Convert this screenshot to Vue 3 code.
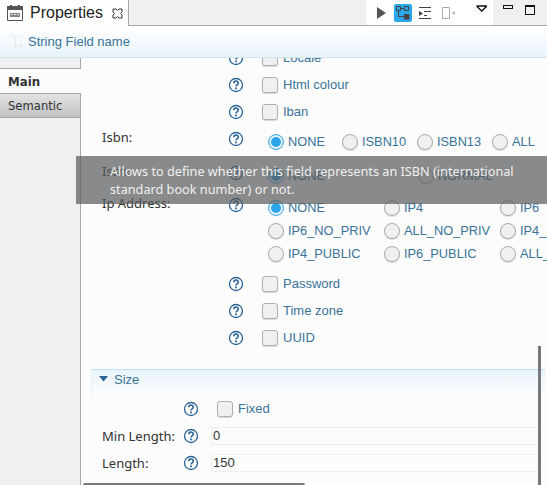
<script setup>
const topChecks = ['Locale', 'Html colour', 'Iban']
const bottomChecks = ['Password', 'Time zone', 'UUID']

const isbnOptions = [
	{ text: 'NONE', width: 74, on: true },
	{ text: 'ISBN10', width: 75 },
	{ text: 'ISBN13', width: 75 },
	{ text: 'ALL', width: 60 }
]
const issnOptions = [
	{ text: 'NONE', width: 150, on: true },
	{ text: 'NORMAL', width: 100 }
]
const ipRows = [
	[{ text: 'NONE', on: true }, { text: 'IP4' }, { text: 'IP6' }],
	[{ text: 'IP6_NO_PRIV' }, { text: 'ALL_NO_PRIV' }, { text: 'IP4_NO_PRIV' }],
	[{ text: 'IP4_PUBLIC' }, { text: 'IP6_PUBLIC' }, { text: 'ALL_PUBLIC' }]
]
</script>

<template>
	<div class="view">
		<header class="tabbar">
			<div class="tab">
				<svg class="tab-icon" width="18" height="18" viewBox="0 0 18 18">
					<path d="M1.5 3.5h15v13h-15z" fill="none" stroke="#555" />
					<path d="M1 2h16v4H1z" fill="#555" />
					<path d="M4 1h2v2H4zM12 1h2v2h-2z" fill="#555" />
					<path d="M4 9h10v4H4z" fill="#888" />
					<path d="M5 10.500h2M8 10.500h2M11 10.500h2" stroke="#ddd" />
				</svg>
				<span class="tab-title">Properties</span>
				<svg class="tab-close" width="11" height="11" viewBox="0 0 11 11">
					<path d="M1 1h3l1.500 1.500L7 1h3v3L8.500 5.500 10 7v3H7L5.500 8.500 4 10H1V7l1.500-1.500L1 4z" fill="none" stroke="#333" />
				</svg>
			</div>
			<div class="tab-fill"></div>
			<div class="toolbar">
				<svg width="18" height="18" viewBox="0 0 18 18">
					<path d="M5 3v12l9-6z" fill="#555" />
				</svg>
				<span class="tool-on">
					<svg width="14" height="14" viewBox="0 0 14 14">
						<path d="M.5.500h4v4h-4zM8.500.500h4v4h-4zM4.500 2.500h4M2.500 4.500v6h6" fill="none" stroke="#444" />
						<path d="M8 8h5.500v5.500H8z" fill="#444" />
					</svg>
				</span>
				<svg width="18" height="18" viewBox="0 0 18 18">
					<path d="M3 3.500h12M8 7.500h7M8 11.500h3M3 14.500h12" stroke="#444" fill="none" />
					<path d="M3 7v5l4-2.500z" fill="#444" />
				</svg>
				<svg width="18" height="18" viewBox="0 0 18 18">
					<path d="M4.500 3.500h7v11h-7z" fill="#fff" stroke="#aaa" />
					<path d="M14 9l2.500-2v4z" fill="#aaa" />
				</svg>
				<svg class="tool-menu" width="12" height="7" viewBox="0 0 12 7">
					<path d="M.5 1h10.500M1 1.500l4.700 4.500 4.700-4.500" fill="none" stroke="#111" stroke-width="1.300" />
				</svg>
			</div>
			<div class="window-btns">
				<span class="win-min"></span>
				<span class="win-max"></span>
			</div>
		</header>

		<div class="title-band">
			<svg width="16" height="16" viewBox="0 0 16 16">
				<path d="M1 2h11v2M6.500 2v11M4.500 13h4M12 9v5M9.500 11.500h5" fill="none" stroke="#e6eaed" stroke-width="1.200" />
			</svg>
			<span class="title-text">String Field name</span>
		</div>

		<div class="body">
			<aside class="sidebar">
				<div class="side-stub"></div>
				<div class="side-main">Main</div>
				<div class="side-semantic">Semantic</div>
				<div class="side-rest"></div>
			</aside>

			<main class="content">
				<div class="form">
					<div v-for="c in topChecks" :key="c" class="row">
						<span class="label"></span>
						<span class="help"><svg width="16" height="16" viewBox="0 0 16 16"><circle cx="8" cy="8" r="6.500" fill="#fff" stroke="#2a6496" stroke-width="1.300" /><path d="M5.800 6.300c0-3 4.500-3 4.500-.2 0 1.800-2.300 1.700-2.300 3.500" fill="none" stroke="#2a6496" stroke-width="1.600" /><path d="M7.100 10.500h1.800v1.800H7.100z" fill="#2a6496" /></svg></span>
						<span class="check"></span>
						<span class="opt-text">{{ c }}</span>
					</div>

					<div class="radio-group first-group">
						<span class="label">Isbn:</span>
						<span class="help"><svg width="16" height="16" viewBox="0 0 16 16"><circle cx="8" cy="8" r="6.500" fill="#fff" stroke="#2a6496" stroke-width="1.300" /><path d="M5.800 6.300c0-3 4.500-3 4.500-.2 0 1.800-2.300 1.700-2.300 3.500" fill="none" stroke="#2a6496" stroke-width="1.600" /><path d="M7.100 10.500h1.800v1.800H7.100z" fill="#2a6496" /></svg></span>
						<div class="radios">
							<div class="radio-row">
								<label v-for="o in isbnOptions" :key="o.text" class="radio-item" :style="{ width: o.width + 'px' }">
									<span class="radio" :class="{ on: o.on }"></span>{{ o.text }}
								</label>
							</div>
						</div>
					</div>

					<div class="radio-group issn-group">
						<span class="label">Issn:</span>
						<span class="help"><svg width="16" height="16" viewBox="0 0 16 16"><circle cx="8" cy="8" r="6.500" fill="#fff" stroke="#2a6496" stroke-width="1.300" /><path d="M5.800 6.300c0-3 4.500-3 4.500-.2 0 1.800-2.300 1.700-2.300 3.500" fill="none" stroke="#2a6496" stroke-width="1.600" /><path d="M7.100 10.500h1.800v1.800H7.100z" fill="#2a6496" /></svg></span>
						<div class="radios">
							<div class="radio-row">
								<label v-for="o in issnOptions" :key="o.text" class="radio-item" :style="{ width: o.width + 'px' }">
									<span class="radio" :class="{ on: o.on }"></span>{{ o.text }}
								</label>
							</div>
						</div>
					</div>

					<div class="radio-group ip-group">
						<span class="label">Ip Address:</span>
						<span class="help"><svg width="16" height="16" viewBox="0 0 16 16"><circle cx="8" cy="8" r="6.500" fill="#fff" stroke="#2a6496" stroke-width="1.300" /><path d="M5.800 6.300c0-3 4.500-3 4.500-.2 0 1.800-2.300 1.700-2.300 3.500" fill="none" stroke="#2a6496" stroke-width="1.600" /><path d="M7.100 10.500h1.800v1.800H7.100z" fill="#2a6496" /></svg></span>
						<div class="radios">
							<div v-for="(r, i) in ipRows" :key="i" class="radio-row">
								<label v-for="o in r" :key="o.text" class="radio-item ip-item">
									<span class="radio" :class="{ on: o.on }"></span>{{ o.text }}
								</label>
							</div>
						</div>
					</div>

					<div v-for="(c, i) in bottomChecks" :key="c" class="row" :class="{ 'after-radios': i === 0 }">
						<span class="label"></span>
						<span class="help"><svg width="16" height="16" viewBox="0 0 16 16"><circle cx="8" cy="8" r="6.500" fill="#fff" stroke="#2a6496" stroke-width="1.300" /><path d="M5.800 6.300c0-3 4.500-3 4.500-.2 0 1.800-2.300 1.700-2.300 3.500" fill="none" stroke="#2a6496" stroke-width="1.600" /><path d="M7.100 10.500h1.800v1.800H7.100z" fill="#2a6496" /></svg></span>
						<span class="check"></span>
						<span class="opt-text">{{ c }}</span>
					</div>

					<section class="size-section">
						<div class="size-head">
							<svg width="9" height="6" viewBox="0 0 9 6"><path d="M0 0h9L4.500 5.500z" fill="#2a6496" /></svg>
							<span class="size-title">Size</span>
						</div>
						<div class="size-row">
							<span class="size-label"></span>
							<span class="help"><svg width="16" height="16" viewBox="0 0 16 16"><circle cx="8" cy="8" r="6.500" fill="#fff" stroke="#2a6496" stroke-width="1.300" /><path d="M5.800 6.300c0-3 4.500-3 4.500-.2 0 1.800-2.300 1.700-2.300 3.500" fill="none" stroke="#2a6496" stroke-width="1.600" /><path d="M7.100 10.500h1.800v1.800H7.100z" fill="#2a6496" /></svg></span>
							<span class="check"></span>
							<span class="opt-text">Fixed</span>
						</div>
						<div class="size-row">
							<span class="size-label">Min Length:</span>
							<span class="help"><svg width="16" height="16" viewBox="0 0 16 16"><circle cx="8" cy="8" r="6.500" fill="#fff" stroke="#2a6496" stroke-width="1.300" /><path d="M5.800 6.300c0-3 4.500-3 4.500-.2 0 1.800-2.300 1.700-2.300 3.500" fill="none" stroke="#2a6496" stroke-width="1.600" /><path d="M7.100 10.500h1.800v1.800H7.100z" fill="#2a6496" /></svg></span>
							<div class="field">0</div>
						</div>
						<div class="size-row">
							<span class="size-label">Length:</span>
							<span class="help"><svg width="16" height="16" viewBox="0 0 16 16"><circle cx="8" cy="8" r="6.500" fill="#fff" stroke="#2a6496" stroke-width="1.300" /><path d="M5.800 6.300c0-3 4.500-3 4.500-.2 0 1.800-2.300 1.700-2.300 3.500" fill="none" stroke="#2a6496" stroke-width="1.600" /><path d="M7.100 10.500h1.800v1.800H7.100z" fill="#2a6496" /></svg></span>
							<div class="field">150</div>
						</div>
					</section>
				</div>

				<div class="v-scroll"></div>
				<div class="h-scroll"></div>
			</main>
		</div>

		<div class="tooltip">Allows to define whether this field represents an ISBN (international standard book number) or not.</div>
	</div>
</template>

<style>
html,
body {
	margin: 0;
	overflow: hidden;
}
</style>

<style scoped>
.view {
	position: relative;
	width: 547px;
	height: 485px;
	overflow: hidden;
	background: #fcfcfc;
	font-family: "Liberation Sans", sans-serif;
	font-size: 13px;
	color: #3a7398;
}

.tabbar {
	display: flex;
	height: 26px;
	background: #eff0f1;
}

.tab {
	display: flex;
	align-items: center;
	width: 129px;
	height: 26px;
	padding-left: 6px;
	box-sizing: border-box;
	background: #fff;
	border-right: 1px solid #a8a8a8;
}

.tab-title {
	margin-left: 6px;
	font-size: 16px;
	color: #222;
}

.tab-close {
	margin-left: 9px;
}

.tab-fill {
	flex: 1;
	border-bottom: 1px solid #a8a8a8;
}

.toolbar {
	display: flex;
	align-items: center;
	width: 127px;
	height: 26px;
	box-sizing: border-box;
	padding-left: 6px;
	gap: 4px;
	background: #fff;
	border-bottom: 1px solid #a8a8a8;
}

.tool-on {
	display: flex;
	align-items: center;
	justify-content: center;
	width: 18px;
	height: 18px;
	border-radius: 2px;
	background: #2ba6e8;
}

.tool-menu {
	margin-left: 16px;
	margin-bottom: 8px;
}

.window-btns {
	display: flex;
	gap: 12px;
	align-items: flex-start;
	flex-shrink: 0;
	width: 54px;
	height: 26px;
	box-sizing: border-box;
	padding: 5px 0 0 10px;
	border-bottom: 1px solid #a8a8a8;
}

.win-min {
	width: 8px;
	height: 2px;
	border: 1px solid #111;
}

.win-max {
	width: 8px;
	height: 7px;
	border: 1px solid #111;
	border-top-width: 2px;
}

.title-band {
	display: flex;
	align-items: center;
	height: 31px;
	padding-left: 9px;
	gap: 3px;
	background: linear-gradient(#fff, #e9f4fb);
	border-bottom: 1px solid #cfe3e8;
}

.body {
	display: flex;
	height: 427px;
}

.sidebar {
	display: flex;
	flex-direction: column;
	width: 81px;
	flex-shrink: 0;
	box-sizing: border-box;
	background: #eff0f1;
	border-right: 1px solid #a5a8ab;
	font-family: "DejaVu Sans", sans-serif;
	color: #333;
}

.side-stub {
	height: 10px;
	border-bottom: 1px solid #a5a8ab;
}

.side-main {
	height: 24px;
	line-height: 27px;
	padding-left: 8px;
	margin-right: -1px;
	background: #fcfcfc;
	font-size: 11.800px;
	font-weight: 700;
}

.side-semantic {
	height: 23px;
	line-height: 24px;
	padding-left: 8px;
	background: linear-gradient(#e2e3e4, #bfc1c3);
	border-top: 1px solid #a5a8ab;
	border-bottom: 1px solid #a5a8ab;
	font-size: 11.600px;
}

.side-rest {
	flex: 1;
}

.content {
	position: relative;
	flex: 1;
	min-width: 0;
	overflow: hidden;
}

.form {
	width: 640px;
	margin-top: -14px;
	padding-left: 21px;
}

.row {
	display: flex;
	align-items: center;
	height: 27px;
}

.label {
	width: 126px;
	flex-shrink: 0;
	font-family: "Noto Sans", sans-serif;
	font-size: 13px;
	line-height: 14px;
	color: #333;
}

.help {
	display: flex;
	width: 34px;
	flex-shrink: 0;
}

.check {
	width: 14px;
	height: 14px;
	margin-right: 5px;
	flex-shrink: 0;
	border: 1px solid #b0b0b0;
	border-radius: 3px;
	background: #eff0f1;
	box-shadow: 0 1px 1px rgba(0, 0, 0, 0.15);
}

.radio-group {
	display: flex;
	align-items: flex-start;
}

.first-group {
	margin-top: 5px;
}

.issn-group {
	margin-top: 11px;
}

.ip-group {
	margin-top: 9px;
}

.radio-group .help {
	margin-top: 1px;
}

.radios {
	margin-left: 6px;
}

.radio-row {
	display: flex;
	height: 23px;
}

.radio-item {
	display: flex;
	align-items: center;
	flex-shrink: 0;
	gap: 4px;
	height: 23px;
	font-size: 12.800px;
}

.ip-item {
	width: 116px;
}

.radio {
	width: 14px;
	height: 14px;
	border: 1px solid #aaa;
	border-radius: 50%;
	background: #eff0f1;
	box-shadow: 0 1px 1px rgba(0, 0, 0, 0.12);
}

.radio.on {
	border-color: #4db2ea;
	background: #2ba6e8;
	box-shadow: inset 0 0 0 2px #e8f5fc;
}

.after-radios {
	margin-top: 5px;
}

.size-section {
	width: 454px;
	margin-top: 18px;
	margin-left: -11px;
}

.size-head {
	display: flex;
	align-items: center;
	height: 26px;
	box-sizing: border-box;
	padding: 0 0 7px 7px;
	gap: 6px;
	border-top: 1px solid #bfe3f6;
	border-left: 1px solid #e4f1f8;
	border-radius: 3px 0 0 0;
	background: linear-gradient(#e9f4fb, #fcfcfc);
}

.size-row {
	display: flex;
	align-items: center;
	height: 27px;
	padding-left: 11px;
}

.size-label {
	width: 81px;
	flex-shrink: 0;
	font-family: "Noto Sans", sans-serif;
	font-size: 13px;
	color: #333;
}

.field {
	flex: none;
	width: 328px;
	height: 18px;
	line-height: 16px;
	box-sizing: border-box;
	padding-left: 1px;
	margin-left: -6px;
	border: 1px solid #eee;
	border-right: 0;
	background: #fcfcfc;
	color: #333;
}

.v-scroll {
	position: absolute;
	top: 288px;
	right: 6px;
	width: 3px;
	height: 140px;
	background: #76787c;
}

.h-scroll {
	position: absolute;
	bottom: 0;
	left: 2px;
	width: 222px;
	height: 2px;
	background: #76787c;
	border-radius: 2px 2px 0 0;
}

.tooltip {
	position: absolute;
	top: 156px;
	left: 76px;
	width: 471px;
	height: 48px;
	box-sizing: border-box;
	padding: 6px 20px 0 34px;
	background: rgba(88, 90, 91, 0.7);
	font-family: "Noto Sans", sans-serif;
	font-size: 12.700px;
	line-height: 18px;
	color: #f0f0f0;
}
</style>
